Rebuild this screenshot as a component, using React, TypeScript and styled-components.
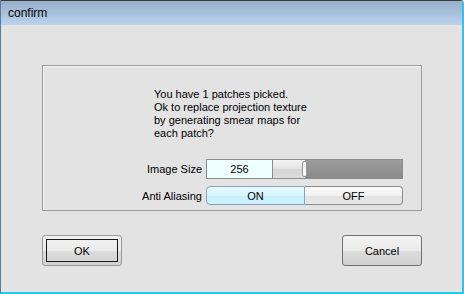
import styled, { createGlobalStyle } from 'styled-components'

const GlobalStyle = createGlobalStyle`
    html, body {
        margin: 0;
        padding: 0;
        background: #e3e3e3;
    }
`

const Window = styled.div`
    width: 464px;
    height: 294px;
    box-sizing: border-box;
    border-top: 1px solid #3a3a3a;
    border-left: 1px solid #5a7d96;
    border-right: 2px solid #25c8ee;
    border-bottom: 2px solid #25c8ee;
    border-top-right-radius: 4px;
    background: #e3e3e3;
    display: flex;
    flex-direction: column;
    font-family: "Liberation Sans", Arial, sans-serif;
    font-size: 11px;
    color: #000;
`

const TitleBar = styled.div`
    height: 24px;
    flex: none;
    display: flex;
    align-items: center;
    padding-left: 7px;
    background: linear-gradient(to bottom, #97afca, #bad2eb);
    font-size: 12px;
`

const Body = styled.div`
    flex: 1;
    display: flex;
    flex-direction: column;
    padding: 40px 40px 0 41px;
`

const Panel = styled.div`
    height: 146px;
    box-sizing: border-box;
    border: 1px solid #9c9c9c;
    box-shadow: inset 1px 1px 0 #f4f4f4;
    padding: 22px 18px 0 0;
    display: flex;
    flex-direction: column;
`

const Message = styled.p`
    margin: 0 0 19px 111px;
    line-height: 13px;
`

const Row = styled.div`
    display: flex;
    justify-content: flex-end;
    align-items: center;
    gap: 4px;
    margin-bottom: ${props => props.$gap ?? 0}px;
`

const Label = styled.span`
    white-space: nowrap;
`

const Controls = styled.div`
    width: 197px;
    height: ${props => props.$h}px;
    display: flex;
`

const NumberField = styled.div`
    width: 66px;
    box-sizing: border-box;
    border: 1px solid #8c8c8c;
    border-right: none;
    background: #f0ffff;
    display: flex;
    align-items: center;
    justify-content: center;
`

const Slider = styled.div`
    flex: 1;
    box-sizing: border-box;
    border: 1px solid #8c8c8c;
    background: linear-gradient(to bottom, #9c9c9c, #8a8a8a);
    display: flex;
`

const SliderFill = styled.div`
    background: linear-gradient(to bottom, #f3f3f3, #e4e4e4 50%, #d6d6d6 51%, #dcdcdc);
    display: flex;
    justify-content: flex-end;
`

const Knob = styled.div`
    width: 3px;
    margin: 1px -2px 1px 0;
    border: 1px solid #999;
    border-radius: 2px;
    background: #f8f8f8;
`

const Toggle = styled.button`
    flex: 1;
    margin: 0;
    padding: 0;
    font: inherit;
    color: #000;
    border: 1px solid ${props => (props.$active ? '#8aa2b2' : '#8c8c8c')};
    background: ${props =>
        props.$active
            ? 'linear-gradient(to bottom, #e6faff, #d6f4ff 50%, #c6eefd 51%, #cdf2ff)'
            : 'linear-gradient(to bottom, #fbfbfb, #f0f0f0 50%, #e2e2e2 51%, #e8e8e8)'};
    &:first-child {
        border-radius: 4px 0 0 4px;
    }
    &:last-child {
        border-left: none;
        border-radius: 0 4px 4px 0;
    }
`

const Footer = styled.div`
    display: flex;
    justify-content: space-between;
    margin-top: 24px;
`

const Button = styled.button`
    width: 80px;
    height: 31px;
    margin: 0;
    padding: 0;
    box-sizing: border-box;
    font-family: "Liberation Sans", Arial, sans-serif;
    font-size: 11px;
    color: #000;
    border: 1px solid ${props => (props.$focused ? '#9a9a9a' : '#707070')};
    border-radius: 3px;
    background: linear-gradient(to bottom, #f2f2f2, #ebebeb 50%, #dddddd 51%, #d0d0d0);
    position: relative;
    &::after {
        content: '';
        display: ${props => (props.$focused ? 'block' : 'none')};
        position: absolute;
        inset: 3px;
        border: 1px solid #1a1a1a;
    }
`

const MAX_SIZE = 1024

export default function App() {
    const imageSize = 256
    const fill = (imageSize / MAX_SIZE) * 100

    return (
        <>
            <GlobalStyle />
            <Window>
                <TitleBar>confirm</TitleBar>
                <Body>
                    <Panel>
                        <Message>
                            You have 1 patches picked.<br />
                            Ok to replace projection texture<br />
                            by generating smear maps for<br />
                            each patch?
                        </Message>
                        <Row $gap={7}>
                            <Label>Image Size</Label>
                            <Controls $h={20}>
                                <NumberField>{imageSize}</NumberField>
                                <Slider>
                                    <SliderFill style={{ width: `${fill}%` }}>
                                        <Knob />
                                    </SliderFill>
                                </Slider>
                            </Controls>
                        </Row>
                        <Row>
                            <Label>Anti Aliasing</Label>
                            <Controls $h={19}>
                                <Toggle $active>ON</Toggle>
                                <Toggle>OFF</Toggle>
                            </Controls>
                        </Row>
                    </Panel>
                    <Footer>
                        <Button $focused>OK</Button>
                        <Button>Cancel</Button>
                    </Footer>
                </Body>
            </Window>
        </>
    )
}
